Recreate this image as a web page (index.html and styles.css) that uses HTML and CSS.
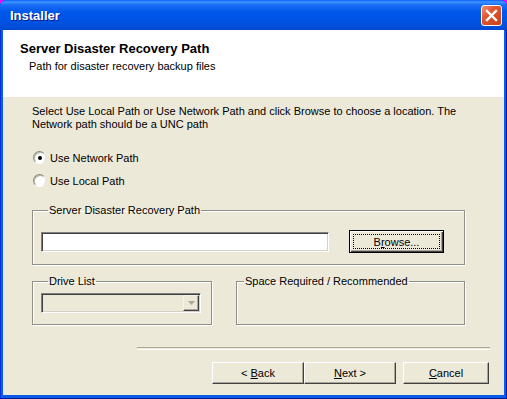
FILE: index.html
```html
<!DOCTYPE html>
<html lang="en">
<head>
    <meta charset="UTF-8">
    <title>Installer</title>
    <link rel="stylesheet" href="styles.css">
</head>
<body>
    <div class="window">
        <div class="titlebar">
            <span class="title">Installer</span>
            <button class="close" aria-label="Close">
                <svg width="13" height="13" viewBox="0 0 13 13">
                    <path d="M2 2 L11 11 M11 2 L2 11" stroke="#fff" stroke-width="2.4" stroke-linecap="square"/>
                </svg>
            </button>
        </div>

        <div class="client">
            <div class="header">
                <div class="header-title">Server Disaster Recovery Path</div>
                <div class="header-sub">Path for disaster recovery backup files</div>
            </div>

            <div class="content">
                <p class="intro">Select Use Local Path or Use Network Path and click Browse to choose a location. The<br>Network path should be a UNC path</p>

                <div class="radios">
                    <label class="radio"><span class="dot checked"></span>Use Network Path</label>
                    <label class="radio"><span class="dot"></span>Use Local Path</label>
                </div>

                <fieldset class="group path-group">
                    <legend>Server Disaster Recovery Path</legend>
                    <div class="path-row">
                        <div class="textbox"></div>
                        <button class="btn default"><span class="focus">B<u>r</u>owse...</span></button>
                    </div>
                </fieldset>

                <div class="group-row">
                    <fieldset class="group drive-group">
                        <legend>Drive List</legend>
                        <div class="combo">
                            <span class="combo-btn">
                                <svg width="7" height="4" viewBox="0 0 7 4"><path d="M0 0 H7 L3.5 4 Z" fill="#aca899"/></svg>
                            </span>
                        </div>
                    </fieldset>
                    <fieldset class="group space-group">
                        <legend>Space Required / Recommended</legend>
                    </fieldset>
                </div>
            </div>

            <div class="footer">
                <div class="separator"></div>
                <div class="nav">
                    <button class="btn nav-btn">&lt; <u>B</u>ack</button>
                    <button class="btn nav-btn"><u>N</u>ext &gt;</button>
                    <button class="btn cancel-btn"><u>C</u>ancel</button>
                </div>
            </div>
        </div>
    </div>
</body>
</html>
```

FILE: styles.css
```css
html, body {
    margin: 0;
    padding: 0;
    background-color: #f0f;
}
body {
    font-family: "Liberation Sans", Arial, sans-serif;
    font-size: 11px;
    color: #000;
}
.window {
    width: 507px;
    height: 399px;
    display: flex;
    flex-direction: column;
    background-color: #0a5ce8;
    border-radius: 6px 6px 0 0;
    box-shadow: inset 0 -1px 0 #001a9c, inset 1px 0 0 #0831d9, inset -1px 0 0 #001a9c;
}
.titlebar {
    height: 30px;
    display: flex;
    align-items: center;
    justify-content: space-between;
    padding: 0 5px 0 10px;
    border-radius: 6px 6px 0 0;
    background: linear-gradient(to bottom, #0a5fff 0, #3d95ff 2px, #1a6cf5 5px, #0058ea 12px, #0054e3 20px, #004ed8 27px, #0047cf 30px);
}
.title {
    color: #fff;
    font-weight: bold;
    font-size: 13px;
    text-shadow: 1px 1px 0 #0a1a8a;
}
.close {
    width: 21px;
    height: 21px;
    padding: 0;
    display: flex;
    align-items: center;
    justify-content: center;
    border: 1px solid #fff;
    border-radius: 3px;
    background: linear-gradient(135deg, #ef8e73 0%, #e0542e 40%, #c9401a 100%);
}
.client {
    flex: 1;
    margin: 0 3px 4px 3px;
    background-color: #ece9d8;
    display: flex;
    flex-direction: column;
}
.header {
    height: 67px;
    background-color: #fff;
    padding: 11px 0 0 17px;
    box-sizing: border-box;
}
.header-title {
    font-weight: bold;
    font-size: 13px;
    line-height: 16px;
}
.header-sub {
    line-height: 13px;
    margin: 3px 0 0 9px;
}
.content {
    padding: 8px 39px 0 29px;
}
.intro {
    margin: 0;
    line-height: 13px;
}
.radios {
    margin-top: 15px;
}
.radio {
    display: flex;
    align-items: center;
    height: 23px;
}
.dot {
    width: 13px;
    height: 13px;
    box-sizing: border-box;
    margin: 0 4px 0 1px;
    border-radius: 50%;
    border: 1px solid;
    border-color: #8a8a80 #e8e6dc #fff #8a8a80;
    background-color: #fff;
    box-shadow: inset 1px 1px 0 #b8b5a6;
    display: flex;
    align-items: center;
    justify-content: center;
}
.dot.checked::after {
    content: "";
    width: 4px;
    height: 4px;
    border-radius: 50%;
    background-color: #000;
}
.group {
    margin: 0;
    border: 1px solid #8f8f88;
    box-shadow: 1px 1px 0 #fff, inset 1px 1px 0 #fff;
    box-sizing: border-box;
    min-width: 0;
}
.group legend {
    padding: 0 1px;
    margin-left: 7px;
    line-height: 13px;
}
.path-group {
    margin-top: 12px;
    width: 433px;
    padding: 13px 20px 11px 8px;
}
.path-row {
    display: flex;
    align-items: center;
    justify-content: space-between;
}
.textbox {
    width: 288px;
    height: 20px;
    box-sizing: border-box;
    background-color: #fff;
    border: 1px solid;
    border-color: #808080 #fff #fff #808080;
    box-shadow: inset 1px 1px 0 #404040, inset -1px -1px 0 #d4d0c8;
}
.btn {
    font-family: inherit;
    font-size: 11px;
    color: #000;
    background-color: #ece9d8;
    border: 1px solid;
    border-color: #fff #404040 #404040 #fff;
    box-shadow: inset -1px -1px 0 #aca899;
    padding: 0;
    box-sizing: border-box;
}
.btn.default {
    width: 95px;
    height: 23px;
    border: 1px solid #000;
    box-shadow: inset 1px 1px 0 #fff, inset -1px -1px 0 #404040, inset -2px -2px 0 #aca899;
    padding: 3px;
    display: flex;
}
.focus {
    flex: 1;
    border: 1px dotted #000;
    display: flex;
    align-items: center;
    justify-content: center;
}
.group-row {
    display: flex;
    gap: 24px;
    margin-top: 10px;
}
.drive-group {
    width: 180px;
    padding: 5px 0 11px 8px;
}
.space-group {
    width: 229px;
    padding: 0;
}
.combo {
    width: 160px;
    height: 20px;
    box-sizing: border-box;
    background-color: #ece9d8;
    border: 1px solid;
    border-color: #808080 #fff #fff #808080;
    box-shadow: inset 1px 1px 0 #404040, inset -1px -1px 0 #d4d0c8;
    display: flex;
    justify-content: flex-end;
    padding: 1px;
}
.combo-btn {
    width: 16px;
    box-sizing: border-box;
    border: 1px solid;
    border-color: #f4f3ee #404040 #404040 #f4f3ee;
    box-shadow: inset -1px -1px 0 #aca899;
    display: flex;
    align-items: center;
    justify-content: center;
}
.footer {
    margin-top: 22px;
    padding: 0 15px 0 134px;
}
.separator {
    height: 1px;
    margin-right: -1px;
    border-top: 1px solid #aca899;
    border-bottom: 1px solid #fff;
}
.nav {
    display: flex;
    justify-content: flex-end;
    margin-top: 12px;
}
.nav-btn {
    width: 92px;
    height: 22px;
}
.cancel-btn {
    width: 86px;
    height: 22px;
    margin-left: 7px;
}
```
